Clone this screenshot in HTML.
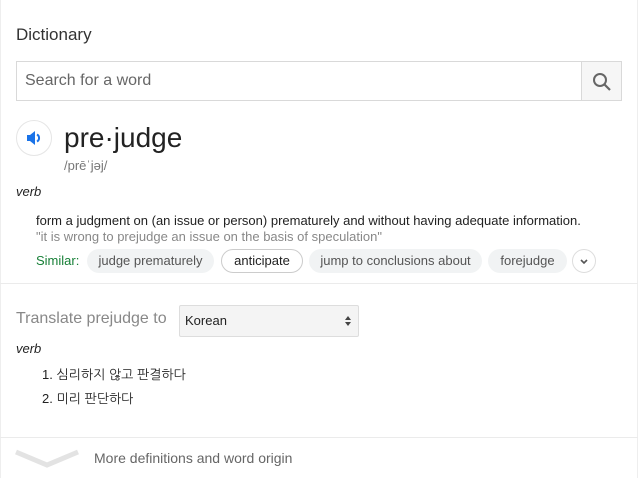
<!DOCTYPE html>
<html><head><meta charset="utf-8"><style>
*{box-sizing:border-box;margin:0;padding:0}
body{width:638px;height:478px;background:#fff;font-family:"Liberation Sans",Arial,sans-serif;position:relative;overflow:hidden;color:#222}
.a{position:absolute;white-space:nowrap}
.chip{position:absolute;top:249px;height:24px;border-radius:12px;background:#f1f3f4;color:#555;font-size:13px;line-height:24px;text-align:center}
</style></head><body>
<div style="position:absolute;left:0;top:0;width:638px;height:478px;border-left:1px solid #eee;border-right:1px solid #eee"></div>
<div class="a" style="left:16px;top:25px;font-size:17px;color:#333">Dictionary</div>
<div class="a" style="left:16px;top:61px;width:606px;height:40px;border:1px solid #d9d9d9"></div>
<div class="a" style="left:25px;top:72px;font-size:16px;color:#666">Search for a word</div>
<div class="a" style="left:581px;top:61px;width:41px;height:40px;background:#f6f6f6;border:1px solid #d9d9d9"></div>
<svg class="a" style="left:591px;top:71px" width="22" height="22" viewBox="0 0 22 22"><circle cx="9" cy="9" r="6" fill="none" stroke="#666" stroke-width="2"/><path d="M13.5 13.5L19 19" stroke="#666" stroke-width="2.2"/></svg>
<div class="a" style="left:16px;top:120px;width:36px;height:36px;border-radius:50%;border:1px solid #e5e5e5;background:#fff"></div>
<svg class="a" style="left:24px;top:128px" width="20" height="20" viewBox="0 0 20 20"><path d="M3 7h3l5-4v14l-5-4H3z" fill="#1a73e8"/><path d="M13 6.5a4 4 0 0 1 0 7" stroke="#1a73e8" stroke-width="2" fill="none"/></svg>
<div class="a" style="left:64px;top:122px;font-size:28px;color:#222">pre·judge</div>
<div class="a" style="left:64px;top:158px;font-size:13px;color:#777">/prēˈjəj/</div>
<div class="a" style="left:16px;top:184px;font-size:13px;font-style:italic;color:#222">verb</div>
<div class="a" style="left:36px;top:213px;font-size:13px;color:#222">form a judgment on (an issue or person) prematurely and without having adequate information.</div>
<div class="a" style="left:36px;top:229px;font-size:13px;color:#888">"it is wrong to prejudge an issue on the basis of speculation"</div>
<div class="a" style="left:36px;top:253px;font-size:13px;color:#188038">Similar:</div>
<div class="chip" style="left:87px;width:127px">judge prematurely</div>
<div class="chip" style="left:221px;width:82px;background:#fff;border:1px solid #ccc;color:#222;line-height:22px">anticipate</div>
<div class="chip" style="left:309px;width:173px">jump to conclusions about</div>
<div class="chip" style="left:488px;width:79px">forejudge</div>
<div class="a" style="left:572px;top:249px;width:24px;height:24px;border-radius:50%;border:1px solid #ddd"></div>
<svg class="a" style="left:578px;top:255px" width="12" height="12" viewBox="0 0 12 12"><path d="M3 5l3 3 3-3" stroke="#555" stroke-width="1.6" fill="none"/></svg>
<div class="a" style="left:0;top:283px;width:638px;height:1px;background:#ebebeb"></div>
<div class="a" style="left:16px;top:310px;font-size:16px;color:#888">Translate prejudge to</div>
<div class="a" style="left:179px;top:305px;width:180px;height:32px;background:#f4f4f4;border:1px solid #ddd;border-radius:2px"></div>
<div class="a" style="left:185px;top:313px;font-size:13px;color:#222">Korean</div>
<svg class="a" style="left:344px;top:315px" width="8" height="12" viewBox="0 0 8 12"><path d="M1 5l3-4 3 4zM1 7l3 4 3-4z" fill="#444"/></svg>
<div class="a" style="left:16px;top:341px;font-size:13px;font-style:italic;color:#222">verb</div>
<div class="a" style="left:42px;top:367px;font-size:13px;color:#222;font-family:'Liberation Sans','NanumGothic','Noto Sans CJK KR',sans-serif">1. 심리하지 않고 판결하다</div>
<div class="a" style="left:42px;top:391px;font-size:13px;color:#222;font-family:'Liberation Sans','NanumGothic','Noto Sans CJK KR',sans-serif">2. 미리 판단하다</div>
<div class="a" style="left:0;top:437px;width:638px;height:1px;background:#ebebeb"></div>
<svg class="a" style="left:14px;top:446px" width="66" height="24" viewBox="0 0 66 24"><path d="M2 6l31 13 31-13" stroke="#e3e3e3" stroke-width="5" fill="none"/></svg>
<div class="a" style="left:94px;top:450px;font-size:14px;color:#666">More definitions and word origin</div>
</body></html>
